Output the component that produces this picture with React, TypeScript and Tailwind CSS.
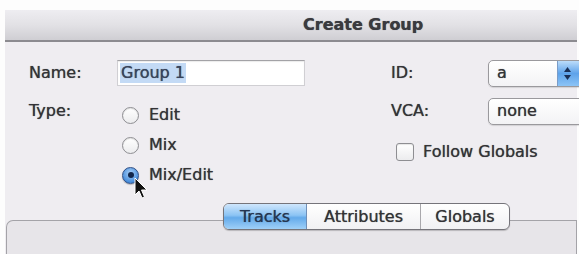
import React from "react";

const font = { fontFamily: '"DejaVu Sans", "Liberation Sans", sans-serif' };

function Radio({ checked }: { checked?: boolean }) {
  if (checked) {
    return (
      <span className="w-[17px] h-[17px] rounded-full border border-[#2f4f86] bg-[radial-gradient(circle_at_50%_35%,#a9d0f7,#4a8fdc_70%,#2e6cc0)] flex items-center justify-center shadow-[0_1px_1px_rgba(0,0,0,0.25)]">
        <span className="w-[6px] h-[6px] rounded-full bg-[#12264a]" />
      </span>
    );
  }
  return (
    <span className="w-[17px] h-[17px] rounded-full border border-[#8e8e92] bg-[linear-gradient(#ffffff,#ececee)] shadow-[inset_0_1px_1px_rgba(0,0,0,0.12)]" />
  );
}

export default function App() {
  return (
    <div
      className="w-[579px] h-[254px] bg-[#fdfdfd] overflow-hidden relative pt-[10px] pl-[5px] text-[16px] text-[#333336] [text-shadow:0_0_0.7px_rgba(40,40,45,0.8)]"
      style={font}
    >
      <div className="w-[572px] h-[244px] bg-[#efedf1] flex flex-col">
        {/* title bar */}
        <div className="h-[32px] bg-[linear-gradient(#eeedf1,#e2e1e5_50%,#cfced3)] border-b-2 border-[#8c8b90] flex items-center pl-[298px]">
          <span className="font-bold text-[16px] text-[#3a3a3f]">Create Group</span>
        </div>

        {/* content */}
        <div className="flex pl-[24px] pt-[17px]">
          {/* left column */}
          <div className="w-[276px] flex flex-col">
            <div className="flex items-center h-[28px]">
              <span className="w-[88px]">Name:</span>
              <div className="w-[188px] h-[26px] bg-white border border-[#d0cfd3] border-t-[#a3a2a6] flex items-center pl-[2px] shadow-[inset_0_1px_1px_rgba(0,0,0,0.08)]">
                <span className="bg-[#c3daf5] h-[20px] leading-[20px] px-[1px] text-[#38445c]">Group 1</span>
              </div>
            </div>
            <div className="flex mt-[12px]">
              <span className="w-[88px] h-[24px] leading-[24px]">Type:</span>
              <div className="flex flex-col pl-[5px] pt-[1px]">
                <div className="h-[30px] flex items-center gap-[10px]">
                  <Radio />
                  <span>Edit</span>
                </div>
                <div className="h-[30px] flex items-center gap-[10px]">
                  <Radio />
                  <span>Mix</span>
                </div>
                <div className="h-[30px] flex items-center gap-[10px]">
                  <Radio checked />
                  <span>Mix/Edit</span>
                </div>
              </div>
            </div>
          </div>

          {/* right column */}
          <div className="ml-[86px] flex flex-col">
            <div className="flex items-center h-[28px]">
              <span className="w-[97px]">ID:</span>
              <div className="w-[100px] h-[27px] rounded-[5px] border border-[#9a999d] bg-[linear-gradient(#ffffff,#f3f3f5)] flex items-center overflow-hidden shadow-[0_1px_1px_rgba(0,0,0,0.12)]">
                <span className="pl-[8px] flex-1">a</span>
                <div className="w-[30px] h-full bg-[linear-gradient(#bcdcfa,#5ea3ea_50%,#8cc4f6)] border-l border-[#7a9cc8] flex flex-col items-start pl-[6px] justify-center gap-[3px]">
                  <svg width="7" height="5" viewBox="0 0 7 5"><path d="M3.5 0 L7 5 L0 5 Z" fill="#1a2f55" /></svg>
                  <svg width="7" height="5" viewBox="0 0 7 5"><path d="M0 0 L7 0 L3.5 5 Z" fill="#1a2f55" /></svg>
                </div>
              </div>
            </div>
            <div className="flex items-center h-[28px] mt-[10px]">
              <span className="w-[97px]">VCA:</span>
              <div className="w-[100px] h-[27px] rounded-[5px] border border-[#9a999d] bg-[linear-gradient(#ffffff,#f3f3f5)] flex items-center shadow-[0_1px_1px_rgba(0,0,0,0.12)]">
                <span className="pl-[8px]">none</span>
              </div>
            </div>
            <div className="flex items-center h-[28px] mt-[13px] pl-[5px] gap-[9px]">
              <span className="w-[18px] h-[18px] rounded-[3px] border border-[#8e8e92] bg-[linear-gradient(#ffffff,#ececee)] shadow-[inset_0_1px_1px_rgba(0,0,0,0.1)]" />
              <span>Follow Globals</span>
            </div>
          </div>
        </div>

        {/* tabs */}
        <div className="mt-[13px] pl-[218px] relative z-10">
          <div className="flex w-[287px] h-[27px] rounded-[6px] border border-[#75747a] overflow-hidden bg-[linear-gradient(#ffffff,#f1f1f3)] shadow-[0_1px_1px_rgba(0,0,0,0.2)]">
            <div className="w-[83px] flex items-center justify-center bg-[linear-gradient(#cfe6fc,#8cc4f4_45%,#64aaea_55%,#9fd0f8)] text-[#243552] border-r border-[#6f8fb8]">
              Tracks
            </div>
            <div className="w-[114px] flex items-center justify-center border-r border-[#a9a8ac]">
              Attributes
            </div>
            <div className="flex-1 flex items-center justify-center">Globals</div>
          </div>
        </div>
        <div className="-mt-[10px] ml-[1px] flex-1 bg-[#e7e5e9] border-t border-l border-r border-[#a4a3a8] rounded-tl-[7px]" />
      </div>

      {/* mouse cursor */}
      <svg
        className="absolute left-[134px] top-[177px]"
        width="14"
        height="23"
        viewBox="0 0 14 23"
      >
        <path
          d="M1 1 L1 18 L5 14 L8 21 L10.5 20 L7.5 13 L13 13 Z"
          fill="#111"
          stroke="#fff"
          strokeWidth="1"
          strokeLinejoin="round"
        />
      </svg>
    </div>
  );
}
